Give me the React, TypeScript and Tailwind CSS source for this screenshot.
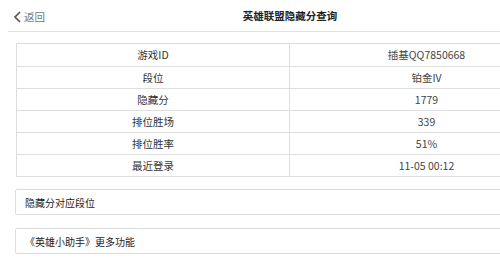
import React from "react";

const rows: [string, string][] = [
  ["游戏ID", "插基QQ7850668"],
  ["段位", "铂金IV"],
  ["隐藏分", "1779"],
  ["排位胜场", "339"],
  ["排位胜率", "51%"],
  ["最近登录", "11-05 00:12"],
];

export default function App() {
  return (
    <div
      className="w-[500px] h-[280px] overflow-hidden bg-white"
      style={{ fontFamily: '"Noto Sans CJK SC", "Liberation Sans", sans-serif' }}
    >
      <div className="w-[580px]">
        <div className="relative h-[32px] flex items-center justify-center border-b border-[#e2e2e2] ml-[8px]">
          <div className="absolute left-[5px] top-[11px] flex items-center text-[#777] text-[10.5px] leading-none">
            <svg width="9" height="12" viewBox="0 0 9 12" className="mr-[2px]">
              <path d="M7 1 L2 6 L7 11" stroke="#555" strokeWidth="1.7" fill="none" />
            </svg>
            <span>返回</span>
          </div>
          <div className="text-[10.5px] font-bold text-[#222] leading-none mt-[1px] -ml-[8px]">英雄联盟隐藏分查询</div>
        </div>
        <div className="ml-[16px] mt-[11px] w-[548px] border border-[#dcdcdc] bg-white">
          {rows.map(([k, v], i) => (
            <div
              key={i}
              className={`grid grid-cols-2 h-[22px] text-[10.5px] text-[#333] ${i > 0 ? "border-t border-[#dedede]" : ""}`}
            >
              <div className="flex items-center justify-center border-r border-[#dedede]">{k}</div>
              <div className="flex items-center justify-center text-[#444]">{v}</div>
            </div>
          ))}
        </div>
        <div className="ml-[15px] mt-[12px] w-[550px] h-[26px] border border-[#dcdcdc] rounded-[2px] flex items-center pl-[9px] text-[10px] text-[#222]">
          隐藏分对应段位
        </div>
        <div className="ml-[15px] mt-[13px] w-[550px] h-[26px] border border-[#dcdcdc] rounded-[2px] flex items-center pl-[9px] text-[10px] text-[#222]">
          《英雄小助手》更多功能
        </div>
      </div>
    </div>
  );
}
